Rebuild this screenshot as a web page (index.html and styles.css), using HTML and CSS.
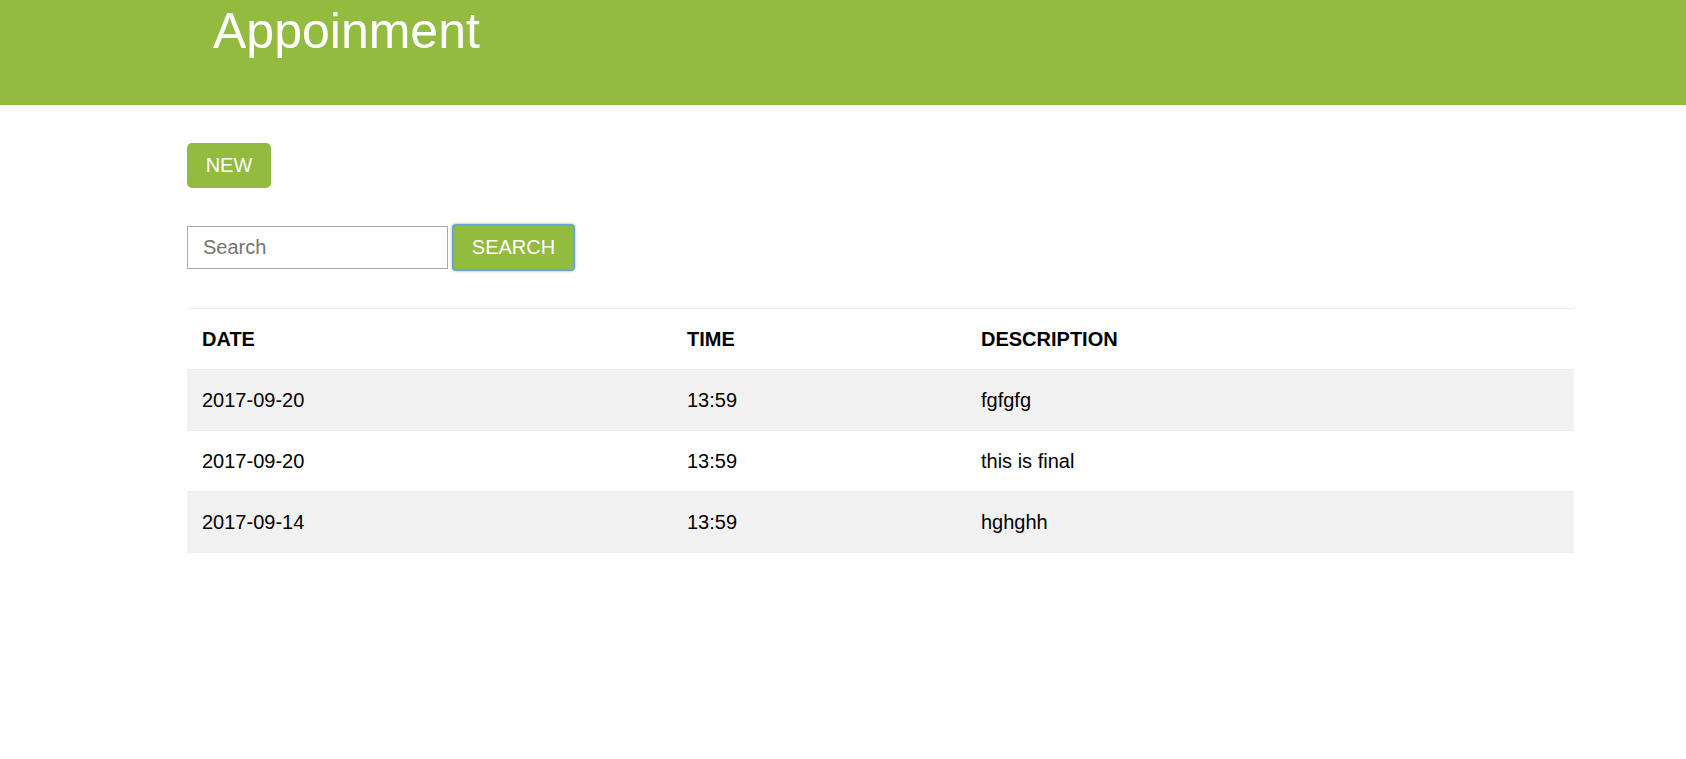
FILE: index.html
```html
<!DOCTYPE html>
<html lang="en">
<head>
<meta charset="utf-8">
<title>Appoinment</title>
<link rel="stylesheet" href="styles.css">
</head>
<body>
<header class="header">
  <h1 class="title">Appoinment</h1>
</header>
<main class="main">
  <button class="btn btn-new" type="button">NEW</button>
  <form class="search-row">
    <input class="search-input" type="text" placeholder="Search">
    <button class="btn btn-search" type="button">SEARCH</button>
  </form>
  <table class="table">
    <colgroup>
      <col class="col-date">
      <col class="col-time">
      <col class="col-desc">
    </colgroup>
    <thead>
      <tr><th>DATE</th><th>TIME</th><th>DESCRIPTION</th></tr>
    </thead>
    <tbody>
      <tr><td>2017-09-20</td><td>13:59</td><td>fgfgfg</td></tr>
      <tr><td>2017-09-20</td><td>13:59</td><td>this is final</td></tr>
      <tr><td>2017-09-14</td><td>13:59</td><td>hghghh</td></tr>
    </tbody>
  </table>
</main>
</body>
</html>
```

FILE: styles.css
```css
* { box-sizing: border-box; }

body {
  margin: 0;
  font-family: "Liberation Sans", Arial, sans-serif;
  color: #000;
  background: #fff;
}

.header {
  height: 105px;
  background: #92bb40;
  padding: 1px 0 0 213px;
}

.title {
  margin: 0;
  font-size: 50px;
  line-height: 60px;
  font-weight: normal;
  color: #fff;
}

.main {
  padding: 38px 112px 0 187px;
}

.btn {
  font-family: "Liberation Sans", Arial, sans-serif;
  font-size: 20px;
  color: #fff;
  background: #92bb40;
  border: none;
  cursor: pointer;
}

.btn-new {
  display: block;
  width: 84px;
  height: 45px;
  padding: 0;
  line-height: 45px;
  text-align: center;
  border-radius: 5px;
}

.search-row {
  display: flex;
  align-items: center;
  gap: 4px;
  margin: 36px 0 37px;
}

.search-input {
  width: 261px;
  height: 43px;
  border: 1px solid #a9a9a9;
  padding: 0 15px;
  font-family: "Liberation Sans", Arial, sans-serif;
  font-size: 20px;
  color: #000;
  outline: none;
}

.search-input::placeholder {
  color: #757575;
}

.btn-search {
  width: 123px;
  height: 47px;
  padding: 0;
  border: 2px solid #6aa3da;
  border-radius: 4px;
  box-shadow: 0 0 2px 1px rgba(146, 187, 64, 0.45);
}

.table {
  width: 100%;
  border-collapse: collapse;
  border-top: 1px solid #ececec;
  font-size: 20px;
}

.col-date { width: 485px; }
.col-time { width: 294px; }

.table th {
  text-align: left;
  font-weight: bold;
  padding: 15px 15px;
  line-height: 30px;
  border-bottom: 1px solid #ececec;
}

.table td {
  padding: 15px 15px;
  line-height: 30px;
  border-bottom: 1px solid #ececec;
}

.table tbody tr:nth-child(odd) {
  background: #f2f2f2;
}
```
